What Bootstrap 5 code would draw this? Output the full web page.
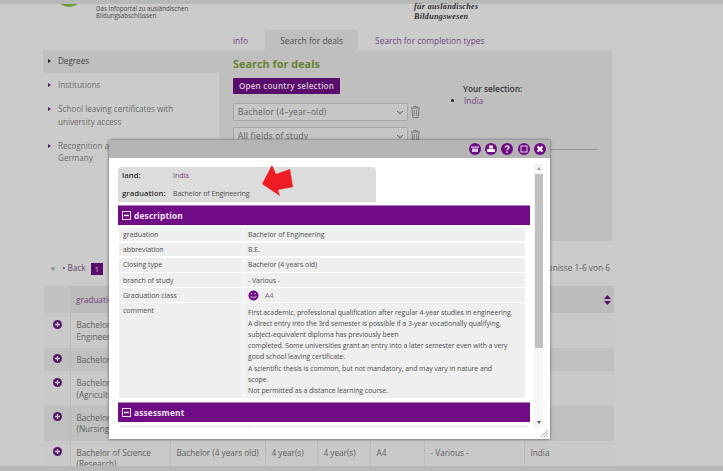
<!DOCTYPE html>
<html lang="en">
<head>
    <meta charset="UTF-8">
    <meta name="viewport" content="width=device-width, initial-scale=1.0">
    <title>anabin - Search for deals</title>
    <link href="https://cdn.jsdelivr.net/npm/bootstrap@5.3.0/dist/css/bootstrap.min.css" rel="stylesheet">
    <style>
        html, body { height: 471px; overflow: hidden; }
        body { background: #cbcbcb; font-family: "Open Sans", "Liberation Sans", sans-serif; font-size: 8.3px; color: #585858; }
        a { text-decoration: none; color: inherit; }
        .page-wrap { height: 471px; overflow: hidden; position: relative; }
        .top-strip { height: 4px; background: #b7b9b7; }
        .head-row { height: 26px; padding-left: 58px; }
        .logo-arc { width: 22px; height: 4px; display: block; }
        .logo-text { margin-left: 16px; margin-top: 1px; font-size: 6.2px; line-height: 7.4px; color: #4a4a4a; width: 318px; }
        .head-claim { font-size: 8px; line-height: 9.5px; font-style: italic; font-weight: 700; color: #2e2e2e; margin-top: -2px; font-family: "Liberation Serif", serif; letter-spacing: .35px; }
        .tab-row { height: 20px; padding-left: 233px; font-size: 8.4px; color: #73447f; }
        .tab-on { width: 93px; background: #bfbfbf; color: #4f4f4f; margin-left: 17px; margin-right: 17px; text-align: center; padding-top: 5px; }
        .tab-off { padding-top: 5px; }
        .main-box { margin-left: 43px; width: 569px; height: 191px; background: #bfbfbf; }
        .side-col { width: 176px; background: #cbcbcb; height: 100%; font-size: 8.1px; line-height: 12.5px; }
        .side-item { padding: 6px 8px 5.5px 15px; position: relative; color: #6b6b6b; }
        .side-item.active { background: #bfbfbf; color: #3e3e3e; height: 23px; padding-top: 5px; }
        .side-item::before { content: ""; position: absolute; left: 5px; top: 10px; border: 2.2px solid transparent; border-left: 3px solid #56176a; border-right: 0; }
        .side-item.active::before { top: 9px; border-left-color: #222; }
        .search-col { padding: 7px 14px 0; flex: 1; min-width: 0; }
        .search-title { font-size: 10.9px; font-weight: 700; color: #668431; line-height: 14px; margin: 0 0 7px; }
        .open-btn { background: #5a0c6c; color: #d6c8da; border: 0; border-radius: 1px; height: 16px; width: 107px; padding: 0; font-size: 8.1px; font-weight: 600; line-height: 16px; letter-spacing: .2px; font-family: inherit; display: block; }
        .filter-row { height: 18px; margin-top: 6px; width: 190px; }
        .first-filter { margin-top: 9px; }
        .filter-sel { width: 175px; height: 18px; min-height: 0; background-color: #c6c6c6; background-size: 8px 7px; background-position: right 3px center; border: 1px solid #a8a8a8; border-radius: 1px; padding: 0 12px 0 4px; font-size: 8.3px; color: #5d5d5d; letter-spacing: .25px; font-family: inherit; flex-shrink: 0; }
        .trash-ico { width: 11px; height: 14px; margin-left: 2px; }
        .pick-box { margin-left: 40px; padding-top: 26px; }
        .pick-title { font-weight: 600; color: #333; font-size: 8.3px; line-height: 12px; }
        .pick-list { margin: 0; padding-left: 1px; color: #73447f; line-height: 12px; }
        .pick-list li::marker { color: #222; }
        .search-rule { margin: 4px 0 0; border: 0; border-top: 1px solid #959595; opacity: 1; }
        .pager-row { height: 45px; padding: 21px 0 0 51px; width: 610px; color: #5f5f5f; }
        .pager-num { background: #5a0c6c; color: #cdbcd2; width: 12px; height: 12px; line-height: 12px; text-align: center; font-size: 8px; margin-left: 5px; margin-top: 1px; }
        .pager-back { margin-left: 7px; color: #654872; }
        .pager-count { margin-left: auto; }
        .result-wrap { margin-left: 44px; width: 570px; height: 180px; overflow: hidden; }
        .result-tbl { table-layout: fixed; width: 570px; border-collapse: collapse; font-size: 8.2px; line-height: 11.5px; color: #5f5f5f; }
        .result-tbl th { background: #bcbcbc; font-weight: 400; height: 27px; color: #73447f; padding: 0 6px; border: 0; position: relative; vertical-align: middle; }
        .result-tbl th:first-child { background: #c2c2c2; }
        .result-tbl td { padding: 6px 3px 5.8px 6px; border-right: 1px solid #bcbcbc; vertical-align: top; }
        .result-tbl td:first-child { padding: 5.5px 0 0 8px; }
        .result-tbl tr.shade td { background: #c0c0c0; }
        .result-tbl tr.flat td { background: #c9c9c9; }
        .sort-ico { position: absolute; right: 3px; top: 9px; width: 7px; height: 10px; }
        .plus-ico { width: 11px; height: 11px; display: block; }
        .bottom-band { position: absolute; left: 0; right: 0; top: 466px; height: 5px; background: #b8b8b8; }
        .detail-win { position: absolute; left: 109px; top: 140px; width: 441px; height: 299px; background: #fff; box-shadow: 0 0 3px rgba(0,0,0,.55); z-index: 5; }
        .win-bar { height: 18px; background: #b4b4b4; padding-right: 4px; }
        .win-btn { width: 12px; height: 12px; margin-left: 4.3px; display: block; }
        .win-body { height: 281px; position: relative; }
        .win-scroll { position: absolute; left: 425px; top: 6px; width: 9px; height: 264px; background: #f6f6f6; }
        .scroll-arrow { height: 10px; position: relative; }
        .scroll-arrow::after { content: ""; position: absolute; left: 2.5px; top: 3px; border: 2px solid transparent; border-top: 0; border-bottom: 3px solid #9a9a9a; }
        .scroll-arrow.down { position: absolute; bottom: 0; left: 0; right: 0; }
        .scroll-arrow.down::after { border-bottom: 0; border-top: 3px solid #555; }
        .scroll-thumb { height: 174px; background: #c1c1c1; margin: 0 .5px; }
        .win-main { margin-left: 9px; width: 412px; height: 270px; overflow: hidden; padding-top: 9px; }
        .info-box { width: 258px; height: 35px; background: #dcdcdc; border-radius: 4px 4px 0 0; padding: 0 0 0 4px; font-size: 7px; color: #555; line-height: 17.5px; }
        .info-key { width: 51px; font-size: 7.8px; font-weight: 600; color: #333; flex-shrink: 0; }
        .info-val { color: #4f4f4f; letter-spacing: -.05px; }
        .info-val.tone { color: #6c4a7c; }
        .sect-bar { height: 20px; background: #6f0b85; border-top: 1px solid #b27fc0; color: #f0e5f3; font-size: 8.3px; font-weight: 700; padding-left: 4px; margin-top: 3px; letter-spacing: .2px; line-height: 18px; }
        .sect-minus { width: 9px; height: 9px; margin-right: 3px; display: block; }
        .desc-grid { display: grid; grid-template-columns: 124px 281px; gap: 1.5px 1px; margin: 2.5px 0 0 1px; width: 406px; font-size: 7px; line-height: 11.1px; color: #4e4e4e; letter-spacing: -.05px; }
        .desc-grid > div { background: #efefef; padding: 1.6px 4px; height: 13.7px; }
        .desc-grid > .tall-key, .desc-grid > .tall-val { height: 95px; }
        .desc-grid > .tall-val { padding-top: 3.4px; font-size: 6.9px; line-height: 11.15px; }
        .smile-ico { width: 11px; height: 11px; margin-right: 6px; vertical-align: -3px; }
        .tone { color: #7a5a8c; }
        .assess-bar { margin-top: 4px; }
        .assess-stub { margin: 3px 0 0 2px; width: 408px; height: 3px; display: grid; grid-template-columns: 135px 1fr; gap: 1px; }
        .assess-stub div { background: #f1f1f1; }
        .mark-arrow { position: absolute; left: 262px; top: 165px; width: 32px; height: 32px; z-index: 6; }
        .grip-ico { position: absolute; right: 1px; bottom: 1px; width: 9px; height: 9px; }
    </style>
</head>
<body>
<div class="page-wrap">
    <div class="top-strip"></div>
    <div class="head-row d-flex">
        <svg class="logo-arc" viewBox="0 0 22 4"><path d="M1 -4 C5 3 17 3 21 -4" fill="none" stroke="#6f9a3a" stroke-width="3"/></svg>
        <div class="logo-text">Das Infoportal zu ausländischen<br>Bildungsabschlüssen</div>
        <div class="head-claim">für ausländisches<br>Bildungswesen</div>
    </div>
    <div class="tab-row d-flex">
        <a class="tab-off" href="#">info</a>
        <a class="tab-on" href="#">Search for deals</a>
        <a class="tab-off" href="#">Search for completion types</a>
    </div>
    <div class="main-box d-flex">
        <div class="side-col">
            <div class="side-item active">Degrees</div>
            <div class="side-item">Institutions</div>
            <div class="side-item">School leaving certificates with university access</div>
            <div class="side-item">Recognition at universities in<br>Germany</div>
        </div>
        <div class="search-col">
            <div class="d-flex">
                <div>
                    <h2 class="search-title">Search for deals</h2>
                    <button class="btn open-btn" type="button">Open country selection</button>
                    <div class="filter-row first-filter d-flex align-items-center">
                        <select class="form-select filter-sel"><option>Bachelor (4–year–old)</option></select>
                        <svg class="trash-ico" viewBox="0 0 11 14"><path d="M1 3h9M4 3V1.5h3V3M2 3l.7 9.5h5.6L9 3M4.2 5v6M6.8 5v6" fill="none" stroke="#7d7d7d" stroke-width="1"/></svg>
                    </div>
                    <div class="filter-row d-flex align-items-center">
                        <select class="form-select filter-sel"><option>All fields of study</option></select>
                        <svg class="trash-ico" viewBox="0 0 11 14"><path d="M1 3h9M4 3V1.5h3V3M2 3l.7 9.5h5.6L9 3M4.2 5v6M6.8 5v6" fill="none" stroke="#7d7d7d" stroke-width="1"/></svg>
                    </div>
                </div>
                <div class="pick-box">
                    <div class="pick-title">Your selection:</div>
                    <ul class="pick-list"><li>India</li></ul>
                </div>
            </div>
            <hr class="search-rule">
        </div>
    </div>
    <div class="pager-row d-flex align-items-start">
        <span>«</span>
        <a class="pager-back" href="#">• Back</a>
        <span class="pager-num">1</span>
        <span class="pager-count">Ergebnisse 1-6 von 6</span>
    </div>
    <div class="result-wrap">
        <table class="result-tbl">
            <colgroup>
                <col style="width:26px"><col style="width:100px"><col style="width:95px"><col style="width:52px"><col style="width:53px"><col style="width:54px"><col style="width:100px"><col style="width:90px">
            </colgroup>
            <thead>
                <tr><th></th><th>graduation</th><th></th><th></th><th></th><th></th><th></th><th><svg class="sort-ico" viewBox="0 0 7 10"><path d="M3.5 0 7 4H0zM3.5 10 0 6h7z" fill="#5a0c6c"/></svg></th></tr>
            </thead>
            <tbody>
                <tr class="flat"><td><svg class="plus-ico" viewBox="0 0 11 11"><circle cx="5.5" cy="5.5" r="4.5" fill="#56176a"/><path d="M5.5 3v5M3 5.5h5" stroke="#ccc" stroke-width="1.3"/></svg></td><td>Bachelor of Engineering</td><td></td><td></td><td></td><td></td><td></td><td></td></tr>
                <tr class="shade"><td><svg class="plus-ico" viewBox="0 0 11 11"><circle cx="5.5" cy="5.5" r="4.5" fill="#56176a"/><path d="M5.5 3v5M3 5.5h5" stroke="#ccc" stroke-width="1.3"/></svg></td><td>Bachelor of Arts</td><td></td><td></td><td></td><td></td><td></td><td></td></tr>
                <tr class="flat"><td><svg class="plus-ico" viewBox="0 0 11 11"><circle cx="5.5" cy="5.5" r="4.5" fill="#56176a"/><path d="M5.5 3v5M3 5.5h5" stroke="#ccc" stroke-width="1.3"/></svg></td><td>Bachelor of Science (Agriculture)</td><td></td><td></td><td></td><td></td><td></td><td></td></tr>
                <tr class="shade"><td><svg class="plus-ico" viewBox="0 0 11 11"><circle cx="5.5" cy="5.5" r="4.5" fill="#56176a"/><path d="M5.5 3v5M3 5.5h5" stroke="#ccc" stroke-width="1.3"/></svg></td><td>Bachelor of Science (Nursing)</td><td></td><td></td><td></td><td></td><td></td><td></td></tr>
                <tr class="flat"><td><svg class="plus-ico" viewBox="0 0 11 11"><circle cx="5.5" cy="5.5" r="4.5" fill="#56176a"/><path d="M5.5 3v5M3 5.5h5" stroke="#ccc" stroke-width="1.3"/></svg></td><td>Bachelor of Science (Research)</td><td>Bachelor (4 years old)</td><td>4 year(s)</td><td>4 year(s)</td><td>A4</td><td>- Various -</td><td>India</td></tr>
            </tbody>
        </table>
    </div>
    <div class="bottom-band"></div>

    <div class="detail-win">
        <div class="win-bar d-flex align-items-center justify-content-end">
            <svg class="win-btn" viewBox="0 0 12 12"><circle cx="6" cy="6" r="6" fill="#6f0b85"/><path d="M2 3.5h8v1.2H2zM3 5.5h6V9H3z" fill="#d9c4df"/></svg>
            <svg class="win-btn" viewBox="0 0 12 12"><circle cx="6" cy="6" r="6" fill="#6f0b85"/><path d="M4 2.5h4v3H4zM2.2 6h7.6v3H2.2z" fill="#fff"/></svg>
            <svg class="win-btn" viewBox="0 0 12 12"><circle cx="6" cy="6" r="6" fill="#6f0b85"/><path d="M4.2 4.6C4.2 2.4 7.9 2.4 7.9 4.5 7.9 5.8 6 5.8 6 7.2" fill="none" stroke="#fff" stroke-width="1.3"/><circle cx="6" cy="9" r=".85" fill="#fff"/></svg>
            <svg class="win-btn" viewBox="0 0 12 12"><circle cx="6" cy="6" r="6" fill="#6f0b85"/><rect x="3" y="3" width="6" height="6" fill="none" stroke="#e6d6ea" stroke-width="1"/></svg>
            <svg class="win-btn" viewBox="0 0 12 12"><circle cx="6" cy="6" r="6" fill="#6f0b85"/><path d="M3.5 3.5l5 5M8.5 3.5l-5 5" stroke="#fff" stroke-width="2.2"/></svg>
        </div>
        <div class="win-body">
            <div class="win-main">
                <div class="info-box">
                    <div class="d-flex"><span class="info-key">land:</span><span class="info-val tone">India</span></div>
                    <div class="d-flex"><span class="info-key">graduation:</span><span class="info-val">Bachelor of Engineering</span></div>
                </div>
                <div class="sect-bar d-flex align-items-center">
                    <svg class="sect-minus" viewBox="0 0 9 9"><rect x=".5" y=".5" width="8" height="8" fill="none" stroke="#e9dcec"/><path d="M2 4.5h5" stroke="#fff" stroke-width="1.4"/></svg>description
                </div>
                <div class="desc-grid">
                    <div>graduation</div><div>Bachelor of Engineering</div>
                    <div>abbreviation</div><div>B.E.</div>
                    <div>Closing type</div><div>Bachelor (4 years old)</div>
                    <div>branch of study</div><div>- Various -</div>
                    <div>Graduation class</div><div><svg class="smile-ico" viewBox="0 0 11 11"><circle cx="5.5" cy="5.5" r="5" fill="#6f0b85"/><path d="M2.5 6c1 2 5 2 6 0" fill="none" stroke="#e8d8ec" stroke-width="1"/><path d="M3 3.8h1.4M6.6 3.8H8" stroke="#e8d8ec" stroke-width="1"/></svg><span class="tone">A4</span></div>
                    <div class="tall-key">comment</div>
                    <div class="tall-val">First academic, professional qualification after regular 4-year studies in engineering.<br>A direct entry into the 3rd semester is possible if a 3-year vocationally qualifying,<br>subject-equivalent diploma has previously been<br>completed. Some universities grant an entry into a later semester even with a very<br>good school leaving certificate.<br>A scientific thesis is common, but not mandatory, and may vary in nature and<br>scope.<br>Not permitted as a distance learning course.</div>
                </div>
                <div class="sect-bar assess-bar d-flex align-items-center">
                    <svg class="sect-minus" viewBox="0 0 9 9"><rect x=".5" y=".5" width="8" height="8" fill="none" stroke="#e9dcec"/><path d="M2 4.5h5" stroke="#fff" stroke-width="1.4"/></svg>assessment
                </div>
                <div class="assess-stub"><div></div><div></div></div>
            </div>
            <div class="win-scroll">
                <div class="scroll-arrow"></div>
                <div class="scroll-thumb"></div>
                <div class="scroll-arrow down"></div>
            </div>
            <svg class="grip-ico" viewBox="0 0 9 9"><path d="M1 8 8 1M4 8 8 4M7 8 8 7" stroke="#a98ab3" stroke-width=".8"/></svg>
        </div>
    </div>
    <svg class="mark-arrow" viewBox="0 0 32 32"><path d="M0 19 10 0 14 9 28 4 31 22 16 25 18 31Z" fill="#ee1c25"/></svg>
</div>
</body>
</html>
